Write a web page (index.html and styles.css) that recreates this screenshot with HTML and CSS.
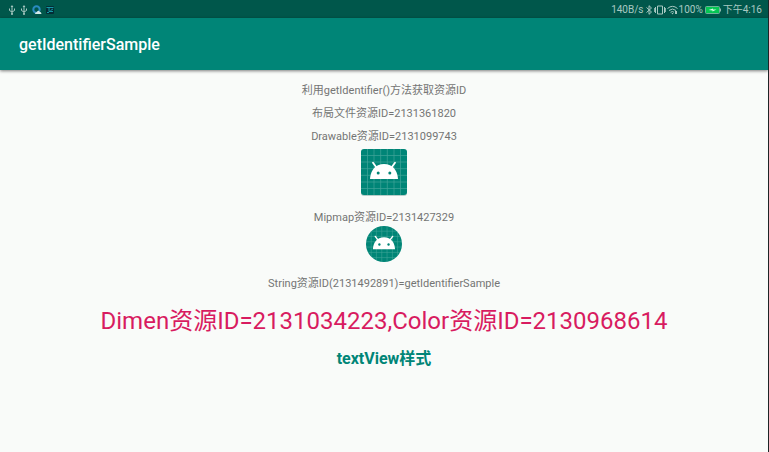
FILE: index.html
```html
<!DOCTYPE html>
<html lang="zh-CN">
<head>
<meta charset="utf-8">
<meta name="viewport" content="width=device-width, initial-scale=1">
<title>getIdentifierSample</title>
<link rel="stylesheet" href="styles.css">
</head>
<body>
<svg class="defs" aria-hidden="true">
  <defs>
    <g id="usb" fill="none" stroke="#a9c9c2" stroke-width="1">
      <path d="M4 1.5V9M1.5 3.5V5.5L4 7L6.5 5.5V3.5"/>
      <path d="M4 0L5.4 2H2.6Z" fill="#a9c9c2" stroke="none"/>
      <circle cx="4" cy="9" r="1" fill="#a9c9c2" stroke="none"/>
    </g>
    <g id="grid" stroke="#6bbab0" stroke-width=".7" opacity=".6">
      <path d="M6.500 0V46M13 0V46M19.700 0V46M26.300 0V46M33 0V46M39.500 0V46M0 6.500H46M0 13H46M0 19.700H46M0 26.300H46M0 33H46M0 39.500H46"/>
    </g>
    <g id="robot">
      <path d="M9 30C9.300 23.500 12.500 18.200 17 16.200Q23 13.600 29 16.200C33.500 18.200 36.700 23.500 37 30Z" fill="#fff"/>
      <path d="M15.500 18.500L12 13.800M30.500 18.500L34 13.800" stroke="#fff" stroke-width="1.800" stroke-linecap="round"/>
      <circle cx="17.200" cy="24" r="1.500" fill="#008577"/>
      <circle cx="28.800" cy="24" r="1.500" fill="#008577"/>
    </g>
    <clipPath id="disc"><circle cx="18" cy="18" r="18"/></clipPath>
  </defs>
</svg>
<header>
  <div class="status">
    <div class="status-group notices">
      <svg width="8" height="10" viewBox="0 0 8 10"><use href="#usb"/></svg>
      <svg width="8" height="10" viewBox="0 0 8 10"><use href="#usb"/></svg>
      <svg width="10" height="10" viewBox="0 0 10 10"><circle cx="4.500" cy="4.500" r="3.200" fill="none" stroke="#2a8bc0" stroke-width="2"/><path d="M3 9Q3 7 5 7Q6 5 7.500 6.500Q9.500 7 9.500 9Z" fill="#d3e9e8"/></svg>
      <svg width="8" height="8" viewBox="0 0 8 8"><rect width="8" height="8" rx="1" fill="#032d36"/><path d="M.5 1.500H7.500M3 2V5.500H7M7 3L4.500 4.500M1 6.500H3" stroke="#1599a5" fill="none"/></svg>
    </div>
    <div class="status-group">
      <span>140B/s</span>
      <svg class="bluetooth" width="8" height="10" viewBox="0 0 8 10"><path d="M1.500 2.500L6.500 7L4 9.300V.7L6.500 3L1.500 7.500" fill="none" stroke="#a9c9c2"/></svg>
      <svg width="12" height="10" viewBox="0 0 12 10"><path d="M3.500 1H8.500V9H3.500ZM1.500 2V8M10.500 2V8M.3 3V7M11.700 3V7" fill="none" stroke="#a9c9c2"/></svg>
      <svg width="11" height="10" viewBox="0 0 11 10"><path d="M.5 3.500Q5.500 -.8 10.500 3.500M2 5.500Q5.500 2.500 9 5.500M3.500 7.300Q5.500 5.700 7 7.300" fill="none" stroke="#a9c9c2"/><path d="M5.500 9.500L4.500 8H6.500ZM8 6H10V9H8Z" fill="#a9c9c2"/></svg>
      <span>100%</span>
      <svg class="battery" width="17" height="8" viewBox="0 0 17 8"><rect x=".5" y=".5" width="14" height="7" rx="1" fill="#04c653" stroke="#6fb39a"/><path d="M15.500 2.500V5.500" stroke="#8fb8ae"/><path d="M3.500 4L8 2.500V3.500H11.500L7.500 5.500V4.500Z" fill="#d2ffe2"/></svg>
      <span>下午4:16</span>
    </div>
  </div>
  <div class="appbar"><h1>getIdentifierSample</h1></div>
</header>
<main>
  <p>利用getIdentifier()方法获取资源ID</p>
  <p>布局文件资源ID=2131361820</p>
  <p>Drawable资源ID=2131099743</p>
  <svg class="drawable" width="48" height="48" viewBox="-1 -1 48 48" role="img" aria-label="Drawable">
    <rect y="1" width="46" height="46" rx="3" fill="#b9cdc9"/>
    <rect width="46" height="46" rx="3" fill="#008577"/>
    <use href="#grid"/><use href="#robot"/>
  </svg>
  <p>Mipmap资源ID=2131427329</p>
  <svg class="mipmap" width="36" height="36" viewBox="0 0 36 36" role="img" aria-label="Mipmap">
    <g clip-path="url(#disc)"><rect width="36" height="36" fill="#008577"/><use href="#grid" transform="scale(.8)"/></g>
    <use href="#robot" transform="translate(-.2 -.5) scale(.79)"/>
  </svg>
  <p>String资源ID(2131492891)=getIdentifierSample</p>
  <p class="dimen">Dimen资源ID=2131034223,Color资源ID=2130968614</p>
  <p class="styled">textView样式</p>
</main>
</body>
</html>
```
FILE: styles.css
```css
* { box-sizing: border-box; }
body {
  margin: 0;
  min-height: 100vh;
  border-right: 1px solid #1d2426;
  background: #f9fbf9;
  color: #747574;
  font: 11px/16px Roboto, "Noto Sans CJK SC", sans-serif;
}
.defs { position: absolute; width: 0; height: 0; }
svg { display: block; flex: none; }
h1, p { margin: 0; }
.status {
  display: flex;
  justify-content: space-between;
  align-items: center;
  height: 18px;
  padding: 1px 6px 0 8px;
  background: #00574b;
  color: #a9c9c2;
  font-size: 10px;
}
.status-group { display: flex; align-items: center; gap: 1px; }
.notices { gap: 4px; }
.battery { margin-left: 1px; }
.appbar {
  display: flex;
  align-items: center;
  height: 52px;
  padding: 2px 19px 0;
  background: #008577;
  box-shadow: 0 1px 3px rgba(0, 0, 0, .5);
}
h1 { color: #fff; font-size: 16px; line-height: 24px; font-weight: 500; }
main {
  display: flex;
  flex-direction: column;
  align-items: center;
  padding-top: 13px;
  text-align: center;
}
p { margin-bottom: 7px; }
.drawable { margin: -4px 0 14px; }
.mipmap { margin: -7px 0 14px; }
.dimen { margin: 4px 0 8px; color: #d81b60; font-size: 24px; line-height: 36px; }
.styled { color: #008577; font-size: 16px; line-height: 24px; font-weight: 700; }
```
